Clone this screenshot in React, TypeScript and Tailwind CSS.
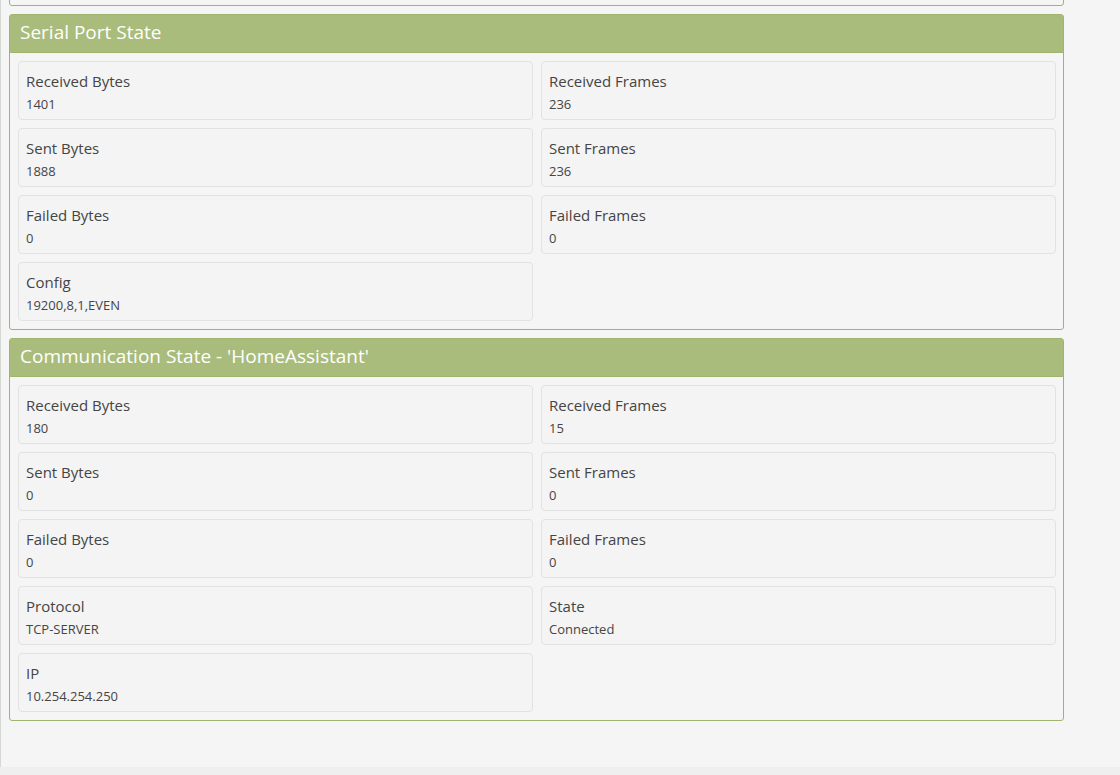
const serial = [
  ["Received Bytes", "1401"],
  ["Received Frames", "236"],
  ["Sent Bytes", "1888"],
  ["Sent Frames", "236"],
  ["Failed Bytes", "0"],
  ["Failed Frames", "0"],
  ["Config", "19200,8,1,EVEN"],
];

const comm = [
  ["Received Bytes", "180"],
  ["Received Frames", "15"],
  ["Sent Bytes", "0"],
  ["Sent Frames", "0"],
  ["Failed Bytes", "0"],
  ["Failed Frames", "0"],
  ["Protocol", "TCP-SERVER"],
  ["State", "Connected"],
  ["IP", "10.254.254.250"],
];

const StatCard = ({ label, value }: { label: string; value: string }) => (
  <div className="h-[59px] rounded-[4px] border border-[#e2e2e2] bg-[#f4f4f4] px-[7px] pt-[8px]">
    <p className="text-[15px] leading-[22px] text-[#454545]">{label}</p>
    <p className="mt-[1px] text-[13px] leading-[22px] text-[#454545]">{value}</p>
  </div>
);

const Panel = ({ title, items }: { title: string; items: string[][] }) => (
  <div className="rounded-[3px] border border-[#9fb56f] bg-[#f4f5f4]">
    <div className="flex h-[38px] items-center border-b border-[#9fb56f] bg-[#a9bc7c] px-[10px] pb-[2px]">
      <h2 className="text-[19px] text-white">{title}</h2>
    </div>
    <div className="grid grid-cols-[515px_515px] gap-x-[8px] gap-y-[8px] py-[8px] pl-[8px]">
      {items.map(([label, value]) => (
        <StatCard key={label} label={label} value={value} />
      ))}
    </div>
  </div>
);

export default function App() {
  return (
    <div
      className="flex h-[775px] w-[1120px] flex-col overflow-hidden bg-[#f4f5f4]"
      style={{ fontFamily: '"Open Sans", "Noto Sans", sans-serif' }}
    >
      <div className="flex-1 overflow-hidden border-l border-[#d3d8d3]">
        <div className="w-[1063px] pl-[8px]">
          <div className="-mt-[20px] h-[26px] rounded-b-[3px] border border-[#9fb56f]" />
          <div className="mt-[8px] flex flex-col gap-[8px]">
            <Panel title="Serial Port State" items={serial} />
            <Panel title="Communication State - 'HomeAssistant'" items={comm} />
          </div>
        </div>
      </div>
      <div className="h-[8px] bg-[#efefef]" />
    </div>
  );
}
